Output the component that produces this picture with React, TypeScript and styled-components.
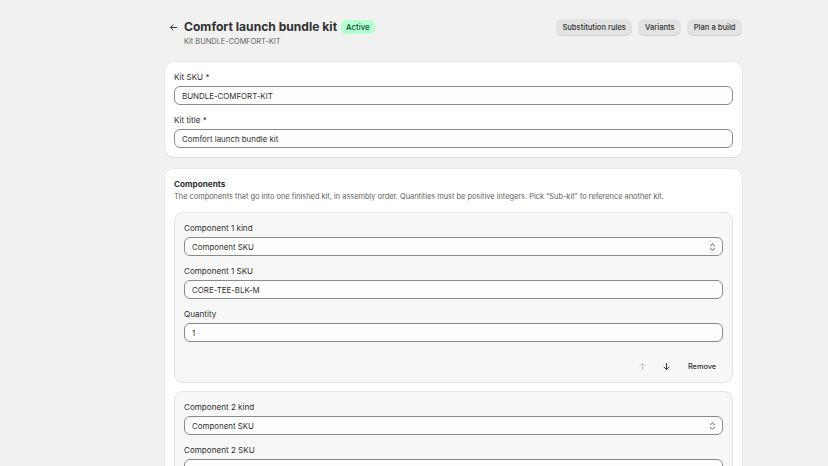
import React from 'react';
import styled, { createGlobalStyle } from 'styled-components';

const GlobalStyle = createGlobalStyle`
  html, body {
    margin: 0;
    padding: 0;
    background: #f1f1f1;
  }
  body {
    font-family: Inter, "Noto Sans", "Liberation Sans", sans-serif;
    color: #303030;
    -webkit-font-smoothing: antialiased;
  }
  * { box-sizing: border-box; }
`;

const Page = styled.div`
  padding: 18px 86px 0 165px;
  display: flex;
  flex-direction: column;
  gap: 12px;
`;

const Header = styled.header`
  display: flex;
  justify-content: space-between;
  align-items: flex-start;
  margin-bottom: 3px;
`;

const TitleArea = styled.div`
  display: flex;
  align-items: flex-start;
  gap: 3px;
`;

const BackButton = styled.button`
  width: 16px;
  height: 18px;
  padding: 0;
  border: 0;
  background: transparent;
  color: #303030;
  display: flex;
  align-items: center;
  justify-content: center;
`;

const TitleBlock = styled.div`
  display: flex;
  flex-direction: column;
  gap: 1px;
`;

const TitleRow = styled.div`
  display: flex;
  align-items: center;
  gap: 4px;
  height: 18px;
`;

const Title = styled.h1`
  margin: 0;
  font-size: 12.1px;
  line-height: 18px;
  font-weight: 700;
  color: #303030;
`;

const Badge = styled.span`
  background: #b4fed2;
  color: #0c5132;
  font-size: 7.8px;
  font-weight: 550;
  border-radius: 5px;
  padding: 2px 5px;
  line-height: 10px;
`;

const Subtitle = styled.div`
  font-size: 7.4px;
  color: #616161;
  line-height: 10px;
`;

const Actions = styled.div`
  display: flex;
  gap: 6px;
  padding-top: 1px;
`;

const ActionButton = styled.button`
  height: 17px;
  padding: 0 6.5px;
  border: 0;
  border-radius: 6px;
  background: #e3e3e3;
  color: #303030;
  font-family: inherit;
  font-size: 7.6px;
  font-weight: 550;
  box-shadow: inset 0 -1px 0 rgba(0, 0, 0, 0.08);
`;

const Card = styled.section`
  background: #ffffff;
  border-radius: 9px;
  padding: 9px;
  box-shadow: 0 1px 0 rgba(26, 26, 26, 0.07), 0 0 0 1px rgba(0, 0, 0, 0.03);
  display: flex;
  flex-direction: column;
  gap: 9px;
`;

const Field = styled.div`
  display: flex;
  flex-direction: column;
  gap: 3px;
`;

const Label = styled.label`
  font-size: 8.1px;
  line-height: 12px;
  color: #303030;
`;

const Input = styled.div`
  position: relative;
  height: 19px;
  border: 1px solid #8a8a8a;
  border-radius: 6px;
  background: #fdfdfd;
  padding: 0 7px;
  display: flex;
  align-items: center;
  font-size: 7.9px;
  color: #303030;
`;

const Chevron = styled.svg`
  position: absolute;
  right: 6px;
  top: 50%;
  transform: translateY(-50%);
`;

const SectionHead = styled.div`
  display: flex;
  flex-direction: column;
  gap: 1px;
`;

const Heading = styled.h2`
  margin: 0;
  font-size: 8.2px;
  line-height: 12px;
  font-weight: 650;
`;

const Description = styled.p`
  margin: 0;
  font-size: 7.4px;
  line-height: 12px;
  color: #616161;
`;

const ComponentList = styled.div`
  display: flex;
  flex-direction: column;
  gap: 8px;
`;

const ComponentBox = styled.div`
  background: #f7f7f7;
  border: 1px solid #e3e3e3;
  border-radius: 9px;
  padding: 9px 9px 6px;
  display: flex;
  flex-direction: column;
  gap: 9px;
`;

const RowActions = styled.div`
  display: flex;
  justify-content: flex-end;
  align-items: center;
  gap: 4px;
  margin-top: 5px;
`;

const IconButton = styled.button<{ $disabled?: boolean }>`
  width: 20px;
  height: 20px;
  border: 0;
  padding: 0;
  background: transparent;
  color: ${(p) => (p.$disabled ? '#c4c4c4' : '#303030')};
  display: flex;
  align-items: center;
  justify-content: center;
`;

const TextButton = styled.button`
  height: 20px;
  padding: 0 7px;
  border: 0;
  background: transparent;
  color: #303030;
  font-family: inherit;
  font-size: 7.3px;
  font-weight: 550;
`;

function ArrowIcon({ dir }: { dir: 'up' | 'down' | 'left' }) {
  const rot = dir === 'up' ? 0 : dir === 'down' ? 180 : -90;
  return (
    <svg width="9" height="9" viewBox="0 0 10 10" style={{ transform: `rotate(${rot}deg)` }}>
      <path d="M5 8.5V1.8M2.2 4.4L5 1.6l2.8 2.8" fill="none" stroke="currentColor" strokeWidth="1.1" strokeLinecap="round" strokeLinejoin="round" />
    </svg>
  );
}

function SelectChevron() {
  return (
    <Chevron width="7" height="9" viewBox="0 0 7 9">
      <path d="M1.5 3.2L3.5 1.4l2 1.8M1.5 5.8l2 1.8 2-1.8" fill="none" stroke="#4a4a4a" strokeWidth="0.9" strokeLinecap="round" strokeLinejoin="round" />
    </Chevron>
  );
}

const components = [
  { kind: 'Component SKU', sku: 'CORE-TEE-BLK-M', qty: '1' },
  { kind: 'Component SKU', sku: '', qty: '1' },
];

export default function App() {
  return (
    <>
      <GlobalStyle />
      <Page>
        <Header>
          <TitleArea>
            <BackButton aria-label="Back">
              <ArrowIcon dir="left" />
            </BackButton>
            <TitleBlock>
              <TitleRow>
                <Title>Comfort launch bundle kit</Title>
                <Badge>Active</Badge>
              </TitleRow>
              <Subtitle>Kit BUNDLE-COMFORT-KIT</Subtitle>
            </TitleBlock>
          </TitleArea>
          <Actions>
            <ActionButton>Substitution rules</ActionButton>
            <ActionButton>Variants</ActionButton>
            <ActionButton>Plan a build</ActionButton>
          </Actions>
        </Header>

        <Card>
          <Field>
            <Label>Kit SKU *</Label>
            <Input>BUNDLE-COMFORT-KIT</Input>
          </Field>
          <Field>
            <Label>Kit title *</Label>
            <Input>Comfort launch bundle kit</Input>
          </Field>
        </Card>

        <Card>
          <SectionHead>
            <Heading>Components</Heading>
            <Description>
              The components that go into one finished kit, in assembly order. Quantities must be positive integers. Pick “Sub-kit” to reference another kit.
            </Description>
          </SectionHead>
          <ComponentList>
            {components.map((c, i) => (
              <ComponentBox key={i}>
                <Field>
                  <Label>Component {i + 1} kind</Label>
                  <Input>
                    {c.kind}
                    <SelectChevron />
                  </Input>
                </Field>
                <Field>
                  <Label>Component {i + 1} SKU</Label>
                  <Input>{c.sku}</Input>
                </Field>
                <Field>
                  <Label>Quantity</Label>
                  <Input>{c.qty}</Input>
                </Field>
                <RowActions>
                  <IconButton $disabled={i === 0} aria-label="Move up">
                    <ArrowIcon dir="up" />
                  </IconButton>
                  <IconButton $disabled={i === components.length - 1} aria-label="Move down">
                    <ArrowIcon dir="down" />
                  </IconButton>
                  <TextButton>Remove</TextButton>
                </RowActions>
              </ComponentBox>
            ))}
          </ComponentList>
        </Card>
      </Page>
    </>
  );
}
